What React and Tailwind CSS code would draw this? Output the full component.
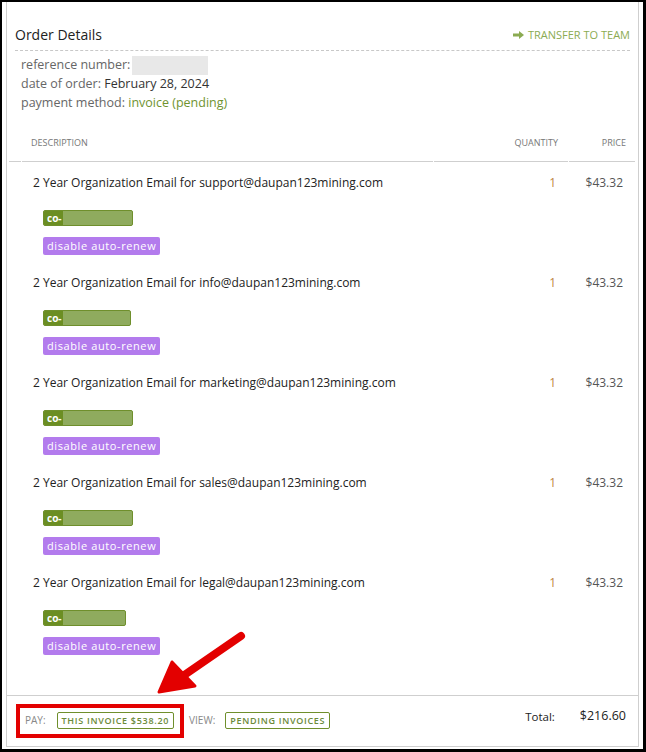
import React from 'react';

const items = [
  { email: 'support@daupan123mining.com', tag: 'w-[90px]' },
  { email: 'info@daupan123mining.com', tag: 'w-[88px]' },
  { email: 'marketing@daupan123mining.com', tag: 'w-[90px]' },
  { email: 'sales@daupan123mining.com', tag: 'w-[90px]' },
  { email: 'legal@daupan123mining.com', tag: 'w-[83px]' },
];

function ItemRow({ email, tag }) {
  return (
    <div className="flex">
      <div className="w-[425px] pl-[24px] pt-[14px] pb-[7px]">
        <div className="whitespace-nowrap text-[12px] leading-[14px] text-[#222]">
          2 Year Organization Email for {email}
        </div>
        <div className={`mt-[20px] ml-[10px] flex h-[16px] ${tag} overflow-hidden rounded-[2px] border border-[#6f8f2c] bg-[#8fab5e]`}>
          <span className="bg-[#6b8e23] pl-[3px] pr-[1px] text-[10px] font-bold leading-[14px] text-white">co-</span>
        </div>
        <div className="mt-[11px] ml-[10px] block h-[18px] w-fit rounded-[2px] bg-[#b37bed] px-[4px] text-[11px] leading-[18px] tracking-[0.6px] text-white">
          disable auto-renew
        </div>
      </div>
      <div className="w-[135px] pt-[14px] pr-[13px] text-right text-[12px] leading-[14px] text-[#c0873f]">1</div>
      <div className="flex-1 pt-[14px] pr-[12px] text-right text-[12px] leading-[14px] text-[#555]">$43.32</div>
    </div>
  );
}

export default function App() {
  return (
    <div
      className="relative flex h-[752px] w-[646px] border-t-2 border-l-2 border-r-[3px] border-b-[3px] border-black bg-white pl-[4px] pr-[4px] pb-[2px]"
      style={{ fontFamily: '"Open Sans", "Noto Sans", sans-serif' }}
    >
      <div className="flex flex-1 flex-col border-x border-b border-[#cfcfcf]">
        {/* header */}
        <div className="mx-[8px] flex items-center justify-between border-b border-dashed border-[#c8c8c8] pt-[24px] pb-[6px]">
          <h2 className="text-[14px] leading-[18px] text-[#222]">Order Details</h2>
          <div className="flex items-center gap-[4px] text-[11px] leading-[18px] text-[#8bab52]">
            <svg width="11" height="8" viewBox="0 0 11 8">
              <path d="M0 2.5h6V0l5 4-5 4V5.5H0z" fill="#8bab52" />
            </svg>
            TRANSFER TO TEAM
          </div>
        </div>

        <div className="px-[14px] pt-[5px] text-[12.5px] leading-[18.5px] text-[#666]">
          <div className="flex items-center">
            reference number:
            <span className="ml-[2px] inline-block h-[19px] w-[76px] bg-[#e8e8e8]" />
          </div>
          <div>
            date of order: <span className="text-[#333]">February 28, 2024</span>
          </div>
          <div>
            payment method: <span className="text-[#6f9330]">invoice (pending)</span>
          </div>
        </div>

        {/* table header */}
        <div className="mx-[2px] mt-[9px] mr-[3px] flex gap-[1px] text-[9px] leading-[10px] text-[#777]">
          <div className="w-[12px] border-b border-[#cfcfcf]" />
          <div className="w-[411px] border-b border-[#cfcfcf] pt-[17px] pb-[13px] pl-[9px]">DESCRIPTION</div>
          <div className="w-[134px] border-b border-[#cfcfcf] pt-[17px] pb-[13px] pr-[10px] text-right">QUANTITY</div>
          <div className="flex-1 border-b border-[#cfcfcf] pt-[17px] pb-[13px] pr-[9px] text-right">PRICE</div>
        </div>

        <div className="mx-[2px] mr-[3px]">
          {items.map((it) => (
            <ItemRow key={it.email} {...it} />
          ))}
        </div>

        <div className="flex-1" />

        {/* footer */}
        <div className="relative flex h-[51px] items-start justify-between border-t border-[#cfcfcf] pl-[18px] pr-[12px]">
          <div className="mt-[16px] flex items-center text-[10px]">
            <span className="text-[#888]">PAY:</span>
            <span className="ml-[11px] rounded-[2px] border border-[#6f8f2c] px-[4px] text-[9px] font-semibold leading-[15px] tracking-[0.7px] text-[#6b8a3a]">
              THIS INVOICE $538.20
            </span>
            <span className="ml-[15px] text-[#888]">VIEW:</span>
            <span className="ml-[10px] rounded-[2px] border border-[#6f8f2c] px-[4px] text-[9px] font-semibold leading-[15px] tracking-[0.7px] text-[#6b8a3a]">
              PENDING INVOICES
            </span>
          </div>
          <div className="mt-[11px] flex items-center text-[#222]">
            <span className="text-[11.5px]">Total:</span>
            <span className="ml-[25px] text-[12.5px] font-medium">$216.60</span>
          </div>
          {/* annotation box */}
          <div className="absolute left-[9px] top-[8px] h-[34px] w-[168px] border-4 border-[#e30000]" />
        </div>
      </div>

      {/* annotation arrow */}
      <svg className="absolute left-0 top-0" width="646" height="752" viewBox="0 0 646 752">
        <line x1="239" y1="634" x2="178" y2="676" stroke="#e30000" strokeWidth="8" strokeLinecap="round" />
        <polygon points="157,690 170,660 193,684" fill="#e30000" stroke="#e30000" strokeWidth="3" strokeLinejoin="round" />
      </svg>
    </div>
  );
}
